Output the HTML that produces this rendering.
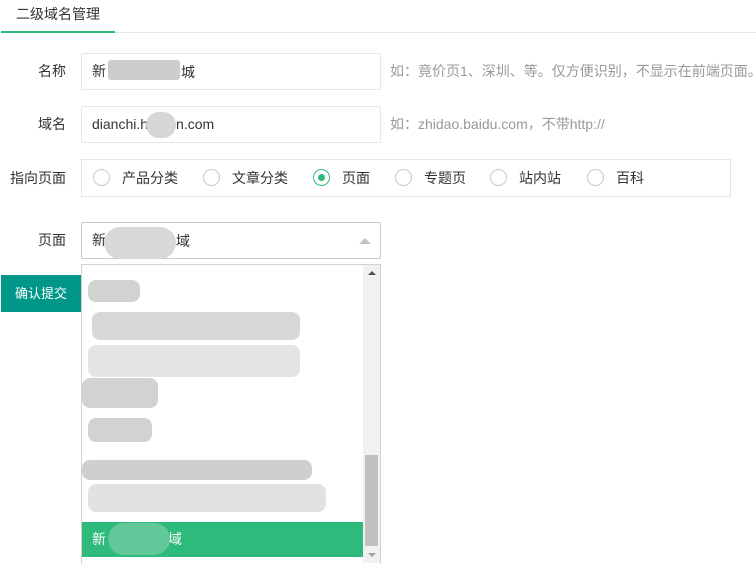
<!DOCTYPE html><html><head><meta charset="utf-8"><style>
body{margin:0;width:756px;height:563px;overflow:hidden;background:#fff;font-family:"Liberation Sans","Noto Sans CJK SC",sans-serif;font-size:14px;color:#333;position:relative}
.a{position:absolute}
.inp{position:absolute;left:81px;height:35px;border:1px solid #e6e6e6;border-radius:2px;line-height:35px;padding-left:10px;box-sizing:content-box;width:288px}
.lbl{position:absolute;width:66px;text-align:right;line-height:37px}
.hint{position:absolute;left:390px;color:#999;line-height:37px;white-space:nowrap}
.r{position:absolute;top:169px;width:17px;height:17px;border:1px solid #c9c9c9;border-radius:50%;box-sizing:border-box}
.rt{position:absolute;top:169px;line-height:18px}
.b{position:absolute;background:#d2d2d2;border-radius:8px}
</style></head><body>
<div class="a" style="left:16px;top:4px;line-height:20px">二级域名管理</div>
<div class="a" style="left:0;top:32px;width:756px;height:1px;background:#e6e6e6"></div>
<div class="a" style="left:1px;top:31px;width:114px;height:2px;background:#2dba7b"></div>

<div class="lbl" style="top:53px">名称</div>
<div class="inp" style="top:53px">新</div>
<div class="b" style="left:108px;top:60px;width:72px;height:20px;background:#cfcccd;border-radius:3px"></div>
<div class="a" style="left:181px;top:62px;line-height:20px">城</div>
<div class="hint" style="top:53px">如：竟价页1、深圳、等。仅方便识别，不显示在前端页面。</div>

<div class="lbl" style="top:106px">域名</div>
<div class="inp" style="top:106px">dianchi.h<span style="color:#fff">xxxx</span>n.com</div>
<div class="b" style="left:146px;top:112px;width:30px;height:26px;background:#d6d6d6;border-radius:13px"></div>
<div class="hint" style="top:106px">如：zhidao.baidu.com，不带http://</div>

<div class="lbl" style="top:160px">指向页面</div>
<div class="a" style="left:81px;top:159px;width:648px;height:36px;border:1px solid #e6e6e6"></div>
<div class="r" style="left:93px"></div><div class="rt" style="left:122px">产品分类</div>
<div class="r" style="left:203px"></div><div class="rt" style="left:232px">文章分类</div>
<div class="r" style="left:313px;border-color:#2dba7b"><div style="position:absolute;left:4px;top:4px;width:7px;height:7px;border-radius:50%;background:#2dba7b"></div></div><div class="rt" style="left:342px">页面</div>
<div class="r" style="left:395px"></div><div class="rt" style="left:424px">专题页</div>
<div class="r" style="left:490px"></div><div class="rt" style="left:519px">站内站</div>
<div class="r" style="left:587px"></div><div class="rt" style="left:616px">百科</div>

<div class="lbl" style="top:222px">页面</div>
<div class="inp" style="top:222px;border-color:#c9c9c9">新</div>
<div class="b" style="left:104px;top:227px;width:72px;height:32px;background:#d8d8d8;border-radius:16px"></div>
<div class="a" style="left:176px;top:231px;line-height:20px">域</div>
<div class="a" style="left:359px;top:238px;width:0;height:0;border-left:6px solid transparent;border-right:6px solid transparent;border-bottom:6px solid #c2c2c2"></div>

<div class="a" style="left:1px;top:275px;width:80px;height:37px;background:#009688;color:#fff;line-height:37px;text-align:center;font-size:13px">确认提交</div>

<div class="a" style="left:81px;top:264px;width:298px;height:299px;border:1px solid #d2d2d2;border-bottom:none;background:#fff"></div>
<div class="a" style="left:363px;top:265px;width:17px;height:298px;background:#f1f1f1"></div>
<div class="a" style="left:365px;top:455px;width:13px;height:91px;background:#c1c1c1"></div>
<div class="a" style="left:368px;top:271px;border-left:4px solid transparent;border-right:4px solid transparent;border-bottom:4px solid #505050"></div>
<div class="a" style="left:368px;top:553px;border-left:4px solid transparent;border-right:4px solid transparent;border-top:4px solid #a3a3a3"></div>

<div class="b" style="left:88px;top:280px;width:52px;height:22px"></div>
<div class="b" style="left:92px;top:312px;width:208px;height:28px;background:#d7d7d7"></div>
<div class="b" style="left:88px;top:345px;width:212px;height:32px;background:#e4e4e4"></div>
<div class="b" style="left:82px;top:378px;width:76px;height:30px"></div>
<div class="b" style="left:88px;top:418px;width:64px;height:24px"></div>
<div class="b" style="left:82px;top:460px;width:230px;height:20px;background:#cfcfcf"></div>
<div class="b" style="left:88px;top:484px;width:238px;height:28px;background:#e2e2e2"></div>

<div class="a" style="left:82px;top:522px;width:281px;height:35px;background:#2dba7b;color:#fff;line-height:35px;padding-left:10px;box-sizing:border-box">新<span style="margin-left:62px">域</span></div>
<div class="b" style="left:108px;top:523px;width:62px;height:32px;background:#62c89a;border-radius:16px"></div>
</body></html>
